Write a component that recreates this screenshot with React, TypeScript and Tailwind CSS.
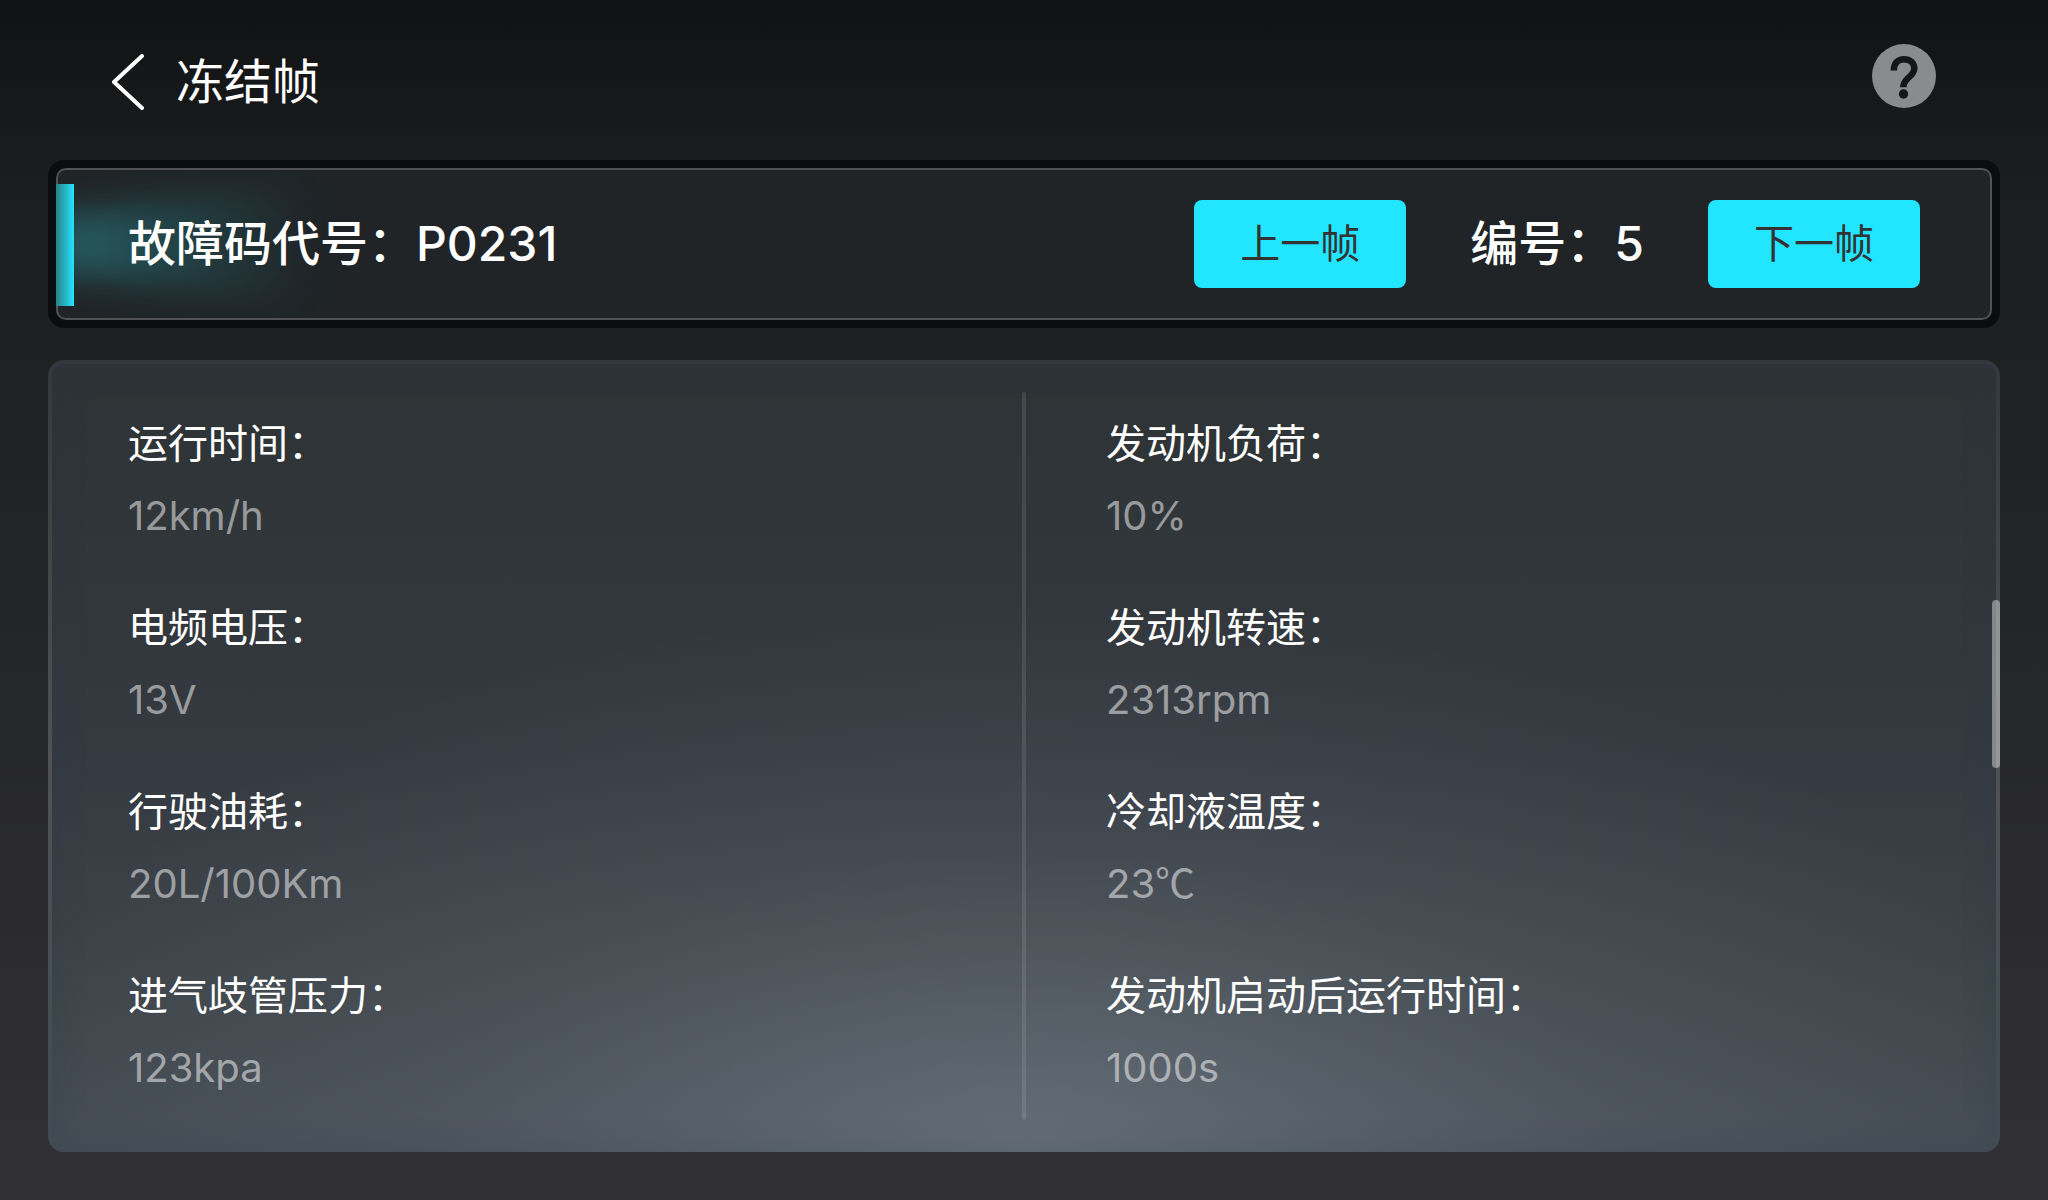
type Reading = { label: string; value: string };

const leftReadings: Reading[] = [
  { label: "运行时间：", value: "12km/h" },
  { label: "电频电压：", value: "13V" },
  { label: "行驶油耗：", value: "20L/100Km" },
  { label: "进气歧管压力：", value: "123kpa" },
];

const rightReadings: Reading[] = [
  { label: "发动机负荷：", value: "10%" },
  { label: "发动机转速：", value: "2313rpm" },
  { label: "冷却液温度：", value: "23℃" },
  { label: "发动机启动后运行时间：", value: "1000s" },
];

function TopBar() {
  return (
    <header className="flex h-40 items-center justify-between px-16">
      <div className="flex items-center gap-8 pt-1">
        <button type="button" aria-label="返回" className="block">
          <svg width="32" height="56" viewBox="0 0 32 56" fill="none" stroke="#fff" strokeWidth="4" strokeLinecap="round" strokeLinejoin="round">
            <path d="M30 2 2 28l28 26" />
          </svg>
        </button>
        <h1 className="text-5xl leading-none">冻结帧</h1>
      </div>
      <button type="button" aria-label="帮助" className="mb-2 block">
        <svg width="64" height="64" viewBox="0 0 64 64">
          <circle cx="32" cy="32" r="32" fill="#8a8b8c" />
          <path d="M21.800 26.500C21.800 19 26 15.200 32 15.200S42.300 19 42.300 24.500C42.300 33 31.300 33.500 31.300 43.200" fill="none" stroke="#151617" strokeWidth="6.500" />
          <circle cx="31.500" cy="50" r="4.700" fill="#151617" />
        </svg>
      </button>
    </header>
  );
}

function FrameButton({ children }: { children: string }) {
  return (
    <button type="button" className="h-22 w-53 rounded-lg bg-[#22e5ff] text-[40px] leading-none text-[#333333]">
      {children}
    </button>
  );
}

function CodeBar() {
  return (
    <section className="rounded-2xl bg-[#0b0c10] p-2">
      <div className="relative flex h-38 items-center justify-between rounded-[10px] border-2 border-[#515256] bg-[#202427] px-[70px]">
        <div className="absolute inset-y-0 left-4 w-80 overflow-hidden">
          <div className="-ml-4 h-full blur-lg">
            <div className="h-full w-full bg-linear-to-r from-[#30c8d0]/35 to-[#30c8d0]/0 to-75% [clip-path:polygon(0_30%,100%_0,100%_100%,0_70%)]" />
          </div>
        </div>
        <div className="absolute top-3.5 bottom-3 -left-0.5 w-[18px] bg-linear-to-r from-[#268288] to-[#22e5ff]" />
        <p className="relative text-5xl leading-none font-medium">故障码代号：P0231</p>
        <div className="flex items-center gap-16">
          <FrameButton>上一帧</FrameButton>
          <p className="text-5xl leading-none font-medium">编号：5</p>
          <FrameButton>下一帧</FrameButton>
        </div>
      </div>
    </section>
  );
}

function ReadingList({ items }: { items: Reading[] }) {
  return (
    <dl className="flex flex-1 flex-col gap-14 py-6 text-[40px] leading-14">
      {items.map((item) => (
        <div key={item.label} className="flex flex-col gap-4">
          <dt>{item.label}</dt>
          <dd className="text-white/50">
            {item.value.replace("℃", "")}
            {item.value.endsWith("℃") && (
              <span className="font-['Noto_Sans_CJK_SC',sans-serif] leading-none">℃</span>
            )}
          </dd>
        </div>
      ))}
    </dl>
  );
}

function ReadingsPanel() {
  return (
    <section className="relative overflow-hidden rounded-2xl bg-linear-to-b from-[#32393d] via-[#505254] to-[#424a53] px-1 pt-1">
      <div className="rounded-t-xl bg-[radial-gradient(ellipse_55%_70%_at_50%_100%,rgba(200,212,230,0.25),rgba(200,212,230,0.08)_55%,transparent),linear-gradient(#2e3336,#31363a_25%,#353a42_50%,#3c4348_75%,#444c54)] shadow-[inset_0_0_32px_rgba(36,56,70,0.25)]">
        <div className="flex px-[76px] pt-7 pb-8">
          <ReadingList items={leftReadings} />
          <div className="mr-20 w-1 rounded-full bg-white/10" />
          <div className="-mr-20 flex flex-1">
            <ReadingList items={rightReadings} />
          </div>
        </div>
      </div>
      <div className="absolute top-60 right-0 h-42 w-2 rounded-full bg-white/40" />
    </section>
  );
}

export default function App() {
  return (
    <main className="min-h-screen bg-linear-to-b from-[#111213] via-[#1c1d1f] via-15% to-[#313135] px-12 pb-12 font-[Inter,'Noto_Sans_CJK_SC',sans-serif] text-white">
      <TopBar />
      <div className="flex flex-col gap-8">
        <CodeBar />
        <ReadingsPanel />
      </div>
    </main>
  );
}
